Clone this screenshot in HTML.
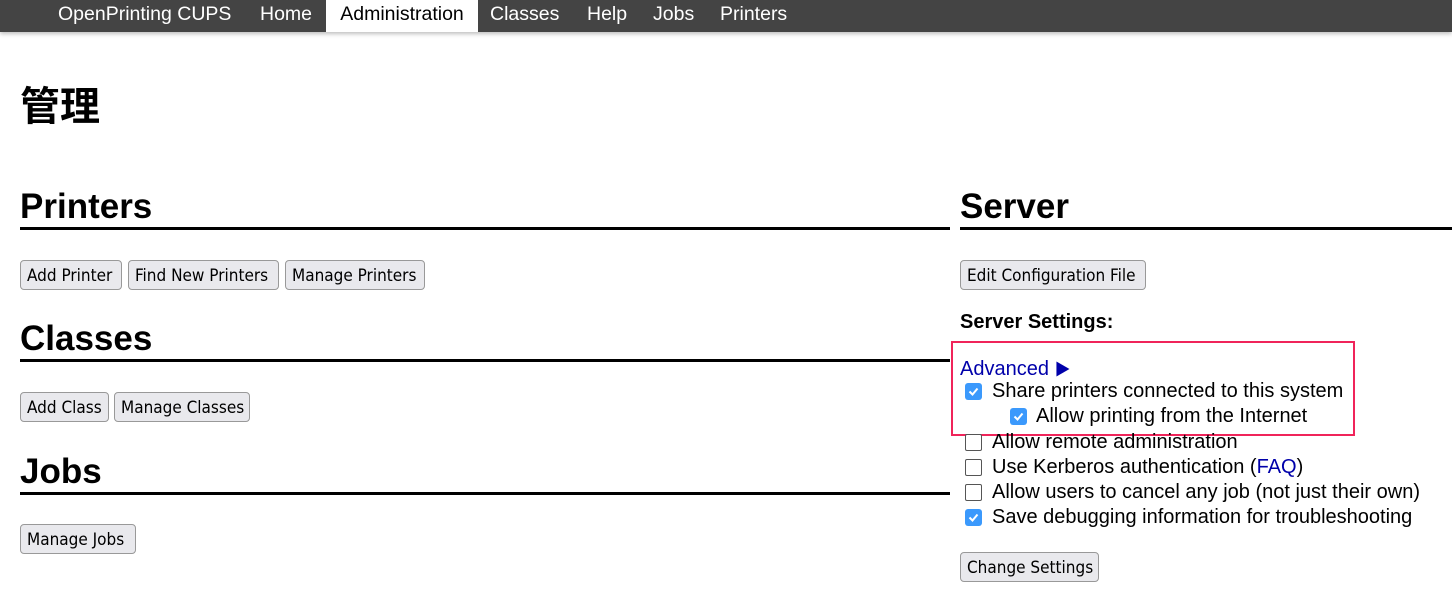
<!DOCTYPE html>
<html><head><meta charset="utf-8"><style>
body{margin:0;width:1452px;height:597px;overflow:hidden;background:#fff;font-family:"Liberation Sans","Noto Sans CJK SC",sans-serif;color:#000;position:relative}
.nav{position:absolute;left:0;top:0;width:1452px;height:32px;background:#444;box-shadow:0 2px 4px rgba(0,0,0,.25)}
.nav span{position:absolute;top:0;height:32px;line-height:28px;font-size:19.5px;color:#fff}
.nav .act{background:#fff;color:#000}
.a{position:absolute}
h1{position:absolute;margin:0;font-size:40px;font-weight:bold;left:20px;top:74px}
.h2{position:absolute;font-size:35px;font-weight:bold;border-bottom:3px solid #000;line-height:40px;height:40px}
.btn{position:absolute;height:30px;border:1px solid #999;border-radius:4px;background:#e9e9ed;font-size:17px;line-height:31px;padding:0 6px;box-sizing:border-box;white-space:nowrap;font-family:"DejaVu Sans Condensed","Liberation Sans",sans-serif;font-stretch:condensed}
.cb{position:absolute;width:17px;height:17px;box-sizing:border-box;border:1.5px solid #555;border-radius:2px;background:#fff}
.cb.on{background:#3b99fc;border:none;border-radius:3px}
.cb.on svg{position:absolute;left:2px;top:2px}
.t{position:absolute;font-size:20px;white-space:nowrap}
</style></head><body>
<div class="nav">
<span style="left:58px">OpenPrinting CUPS</span>
<span style="left:260px">Home</span>
<span class="act" style="left:326px;width:152px;text-align:center">Administration</span>
<span style="left:490px">Classes</span>
<span style="left:587px">Help</span>
<span style="left:653px">Jobs</span>
<span style="left:720px">Printers</span>
</div>
<h1>管理</h1>
<div class="h2" style="left:20px;top:187px;width:930px">Printers</div>
<div class="btn" style="left:20px;top:260px;width:102px">Add Printer</div>
<div class="btn" style="left:128px;top:260px;width:151px">Find New Printers</div>
<div class="btn" style="left:285px;top:260px;width:140px">Manage Printers</div>
<div class="h2" style="left:20px;top:319px;width:930px">Classes</div>
<div class="btn" style="left:20px;top:392px;width:89px">Add Class</div>
<div class="btn" style="left:114px;top:392px;width:136px">Manage Classes</div>
<div class="h2" style="left:20px;top:452px;width:930px">Jobs</div>
<div class="btn" style="left:20px;top:524px;width:116px">Manage Jobs</div>

<div class="h2" style="left:960px;top:187px;width:492px">Server</div>
<div class="btn" style="left:960px;top:260px;width:186px">Edit Configuration File</div>
<div class="t" style="left:960px;top:311px;font-weight:bold">Server Settings:</div>
<div class="a" style="left:951px;top:341px;width:400px;height:91px;border:2px solid #f0245a;box-sizing:content-box"></div>
<div class="t" style="left:960px;top:356px;color:#00a">Advanced <span style="font-size:16px">&#9654;</span></div>

<div class="cb on" style="left:965px;top:383px"><svg width="13" height="13" viewBox="0 0 13 13"><path d="M2.5 6.5l3 3L10.5 3.5" stroke="#fff" stroke-width="2" fill="none"/></svg></div>
<div class="t" style="left:992px;top:380px">Share printers connected to this system</div>
<div class="cb on" style="left:1010px;top:408px"><svg width="13" height="13" viewBox="0 0 13 13"><path d="M2.5 6.5l3 3L10.5 3.5" stroke="#fff" stroke-width="2" fill="none"/></svg></div>
<div class="t" style="left:1036px;top:405px">Allow printing from the Internet</div>
<div class="cb" style="left:965px;top:434px"></div>
<div class="t" style="left:992px;top:431px">Allow remote administration</div>
<div class="cb" style="left:965px;top:459px"></div>
<div class="t" style="left:992px;top:456px">Use Kerberos authentication (<span style="color:#00a">FAQ</span>)</div>
<div class="cb" style="left:965px;top:484px"></div>
<div class="t" style="left:992px;top:481px">Allow users to cancel any job (not just their own)</div>
<div class="cb on" style="left:965px;top:509px"><svg width="13" height="13" viewBox="0 0 13 13"><path d="M2.5 6.5l3 3L10.5 3.5" stroke="#fff" stroke-width="2" fill="none"/></svg></div>
<div class="t" style="left:992px;top:506px">Save debugging information for troubleshooting</div>
<div class="btn" style="left:960px;top:552px;width:139px">Change Settings</div>
</body></html>
